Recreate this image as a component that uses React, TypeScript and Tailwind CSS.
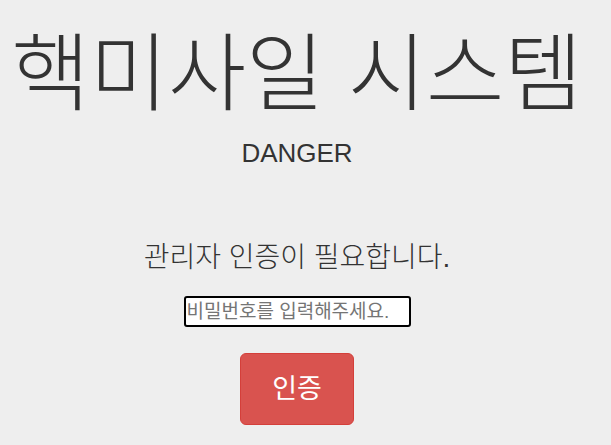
export default function App() {
  return (
    <div
      className="min-h-[445px] w-full bg-[#eeeeee] text-[#333333]"
      style={{ fontFamily: '"Liberation Sans", "Noto Sans CJK KR", sans-serif' }}
    >
      <div className="w-[594px] flex flex-col items-center">
        <h1 className="mt-[33px] text-[85px] leading-[84px] font-light whitespace-nowrap">핵미사일 시스템</h1>
        <div className="mt-[23px] text-[26px] leading-[26px]">DANGER</div>
        <p className="mt-[78px] text-[28px] leading-[28px] font-light">관리자 인증이 필요합니다.</p>
        <input
          type="text"
          placeholder="비밀번호를 입력해주세요."
          className="mt-[24px] w-[227px] h-[31px] bg-white border-2 border-black rounded-[3px] px-[1px] text-[19px] placeholder:text-[#757575] outline-none"
        />
        <button className="mt-[26px] w-[114px] h-[72px] bg-[#d9534f] border border-[#d43f3a] rounded-[6px] text-white text-[27px]">
          인증
        </button>
      </div>
    </div>
  );
}
